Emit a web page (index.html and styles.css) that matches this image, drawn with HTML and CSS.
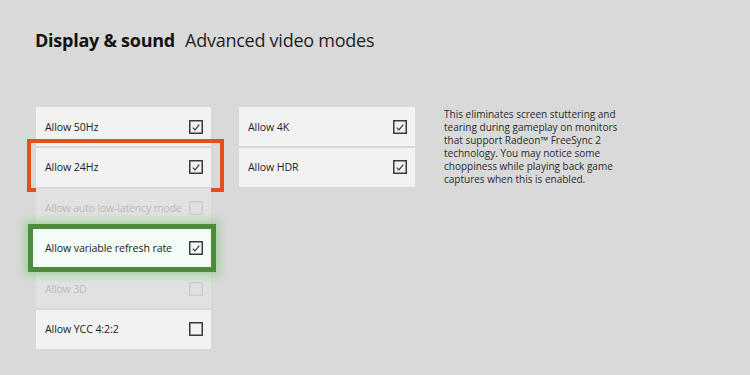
FILE: index.html
```html
<!DOCTYPE html>
<html>
<head>
<meta charset="utf-8">
<link rel="stylesheet" href="styles.css">
</head>
<body>
<div class="page">
  <h1 class="title"><span class="title-main">Display &amp; sound</span><span class="title-sub">Advanced video modes</span></h1>
  <div class="content">
    <div class="col col-left">
      <div class="row"><span class="label">Allow 50Hz</span><svg class="cb" viewBox="0 0 14 14"><rect x="0.75" y="0.75" width="12.5" height="12.5"/><path d="M3.8 7.6 L6 9.8 L10.3 4.6"/></svg></div>
      <div class="row row-marked"><span class="label">Allow 24Hz</span><svg class="cb" viewBox="0 0 14 14"><rect x="0.75" y="0.75" width="12.5" height="12.5"/><path d="M3.8 7.6 L6 9.8 L10.3 4.6"/></svg></div>
      <div class="row row-disabled"><span class="label">Allow auto low-latency mode</span><svg class="cb" viewBox="0 0 14 14"><rect x="0.75" y="0.75" width="12.5" height="12.5"/></svg></div>
      <div class="row row-focus"><span class="label">Allow variable refresh rate</span><svg class="cb" viewBox="0 0 14 14"><rect x="0.75" y="0.75" width="12.5" height="12.5"/><path d="M3.8 7.6 L6 9.8 L10.3 4.6"/></svg></div>
      <div class="row row-disabled"><span class="label">Allow 3D</span><svg class="cb" viewBox="0 0 14 14"><rect x="0.75" y="0.75" width="12.5" height="12.5"/></svg></div>
      <div class="row"><span class="label">Allow YCC 4:2:2</span><svg class="cb" viewBox="0 0 14 14"><rect x="0.75" y="0.75" width="12.5" height="12.5"/></svg></div>
    </div>
    <div class="col col-right">
      <div class="row"><span class="label">Allow 4K</span><svg class="cb" viewBox="0 0 14 14"><rect x="0.75" y="0.75" width="12.5" height="12.5"/><path d="M3.8 7.6 L6 9.8 L10.3 4.6"/></svg></div>
      <div class="row"><span class="label">Allow HDR</span><svg class="cb" viewBox="0 0 14 14"><rect x="0.75" y="0.75" width="12.5" height="12.5"/><path d="M3.8 7.6 L6 9.8 L10.3 4.6"/></svg></div>
    </div>
    <p class="desc">This eliminates screen stuttering and tearing during gameplay on monitors that support Radeon™ FreeSync 2 technology. You may notice some choppiness while playing back game captures when this is enabled.</p>
  </div>
</div>
</body>
</html>
```

FILE: styles.css
```css
html, body {
  margin: 0;
  padding: 0;
}
body {
  background: #d9d9d9;
  font-family: "Open Sans", "Noto Sans", sans-serif;
  color: #1a1a1a;
  width: 750px;
  height: 375px;
  overflow: hidden;
}
.page {
  padding: 29px 0 0 35px;
}
.title {
  margin: 0;
  font-size: 18px;
  line-height: 22px;
  font-weight: 400;
  letter-spacing: -0.25px;
  display: flex;
  gap: 10px;
}
.title-main {
  font-weight: 700;
  color: #111;
}
.title-sub {
  color: #1f1f1f;
}
.content {
  margin-top: 56px;
  margin-left: 1px;
  display: flex;
  align-items: flex-start;
}
.col {
  display: flex;
  flex-direction: column;
  gap: 1.5px;
}
.col-left {
  width: 175px;
}
.col-right {
  width: 176px;
  margin-left: 28px;
}
.row {
  position: relative;
  height: 39px;
  box-sizing: border-box;
  display: flex;
  align-items: center;
  justify-content: space-between;
  padding: 0 8px 0 9px;
  background: #f2f2f2;
}
.label {
  font-size: 10.6px;
  color: #222;
  letter-spacing: -0.1px;
}
.row-disabled .label {
  letter-spacing: -0.2px;
}
.cb {
  width: 14px;
  height: 14px;
  flex: none;
}
.cb rect {
  fill: none;
  stroke: #3a3a3a;
  stroke-width: 1.5;
}
.cb path {
  fill: none;
  stroke: #3a3a3a;
  stroke-width: 1.2;
}
.row-disabled {
  background: #e1e1e1;
}
.row-disabled .label {
  color: #bcbcbc;
}
.row-disabled .cb rect {
  stroke: #c9c9c9;
  stroke-width: 1.2;
}
.row-marked::after {
  content: "";
  position: absolute;
  top: -8.5px;
  bottom: -5.5px;
  left: -9px;
  right: -13px;
  border: 4px solid #e0511d;
  pointer-events: none;
}
.row-focus {
  z-index: 1;
  height: 48px;
  margin: -4.5px -5px -4.5px -8px;
  border: 5px solid #4e8b3b;
  padding: 0 8px 0 12px;
  background: #f4fcf7;
  box-shadow: 0 0 9px 3px rgba(110, 200, 110, 0.55);
}
.desc {
  margin: 1px 0 0 29px;
  width: 176px;
  font-size: 10px;
  line-height: 13px;
  color: #2a2a2a;
}
```
